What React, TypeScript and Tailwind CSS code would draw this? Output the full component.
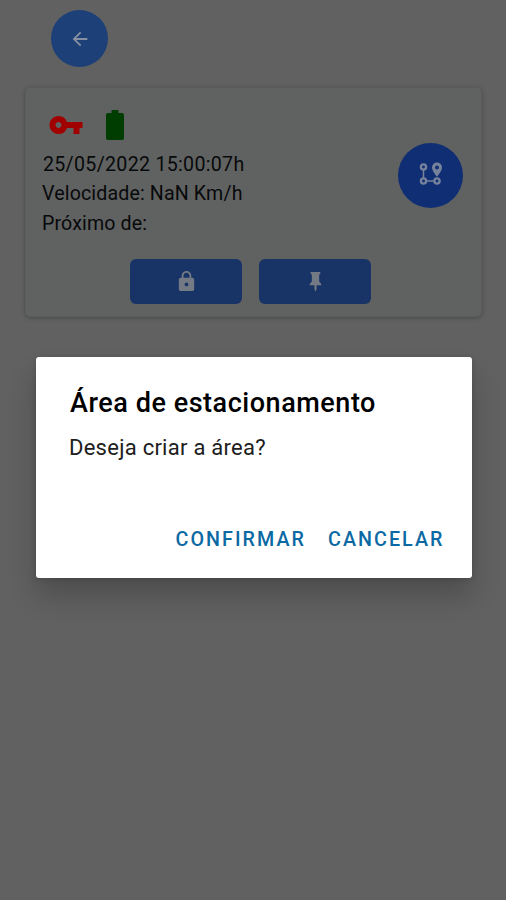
import React from "react";
import { MdArrowBack, MdLock, MdVpnKey } from "react-icons/md";

function RouteIcon() {
  return (
    <svg width="24" height="24" viewBox="0 0 24 24" fill="none" stroke="#77839d" strokeWidth="2.3" className="-mt-[3px]">
      <circle cx="4.5" cy="5" r="2.6" />
      <circle cx="4.5" cy="19" r="2.6" />
      <circle cx="18" cy="19" r="2.6" />
      <path strokeWidth="1.5" d="M4.5 8v8M7.5 19h7.5" />
      <path
        fill="#77839d"
        stroke="none"
        fillRule="evenodd"
        d="M18 .5a5 5 0 0 0-5 5c0 3.5 5 9.2 5 9.2s5-5.7 5-9.2a5 5 0 0 0-5-5Zm0 3a2 2 0 1 1 0 4a2 2 0 0 1 0-4Z"
      />
    </svg>
  );
}

function PinIcon() {
  return (
    <svg width="23" height="23" viewBox="0 0 24 24" fill="#747a84" className="-mt-[1px]">
      <path d="M17 4V2H7v2l1.2 1v7L6 14.5V16h4.900v4l1.100 2.500 1.100-2.500v-4H18v-1.500L15.800 12V5L17 4Z" />
    </svg>
  );
}

function BatteryIcon() {
  return (
    <svg width="18" height="30" viewBox="0 0 18 30" fill="#003d00" className="ml-[22px]">
      <path d="M5.500 0h7v3H16a2 2 0 0 1 2 2v23a2 2 0 0 1-2 2H2a2 2 0 0 1-2-2V5a2 2 0 0 1 2-2h3.500Z" />
    </svg>
  );
}

function VehicleCard() {
  return (
    <section className="ml-[25px] mr-[24px] mt-5 h-[230px] rounded-[5px] border border-[#5b5d5c] bg-[#606261] pt-[18px] shadow-[0_1px_4px_rgba(0,0,0,0.25)]">
      <div className="flex h-[37px] items-center pl-[22px]">
        <MdVpnKey size={36} color="#a00000" />
        <BatteryIcon />
      </div>
      <div className="flex justify-between pl-[16px] pr-[18px]">
        <div className="pt-[7px] text-[19.6px] leading-[29.4px] text-[#08090b]">
          <p className="pl-px tracking-[0.3px]">25/05/2022 15:00:07h</p>
          <p className="tracking-[0.14px]">Velocidade: NaN Km/h</p>
          <p className="tracking-[0.14px]">Próximo de:</p>
        </div>
        <button className="flex h-[65px] w-[65px] items-center justify-center rounded-full bg-[#102e73]">
          <RouteIcon />
        </button>
      </div>
      <div className="mt-[21px] flex justify-center gap-[17px] pr-[6px]">
        <button className="flex h-[45px] w-[112px] items-center justify-center rounded-[6px] bg-[#183466]">
          <MdLock size={23} color="#747a84" />
        </button>
        <button className="flex h-[45px] w-[112px] items-center justify-center rounded-[6px] bg-[#183466]">
          <PinIcon />
        </button>
      </div>
    </section>
  );
}

function ParkingDialog() {
  return (
    <div
      role="dialog"
      className="absolute left-[36px] top-[357px] flex h-[221px] w-[435.5px] flex-col rounded-[3px] bg-white pl-[33px] pr-[27px] pt-[28px] shadow-[0_18px_28px_rgba(0,0,0,0.2),0_1px_5px_rgba(0,0,0,0.15)]"
    >
      <h2 className="pl-px text-[27px] font-medium leading-9 tracking-[0.54px] text-black">Área de estacionamento</h2>
      <p className="mt-[12px] text-[22px] leading-[30px] tracking-[0.26px] text-[#202020]">Deseja criar a área?</p>
      <div className="mt-[63px] flex justify-end gap-[22px] text-[19.7px] font-medium leading-[28px] tracking-[2.05px] text-[#0b69a3]">
        <button>CONFIRMAR</button>
        <button>CANCELAR</button>
      </div>
    </div>
  );
}

export default function App() {
  return (
    <main className="relative h-[900px] w-[506px] overflow-hidden bg-[#616161] pt-[10px] font-['Roboto',sans-serif]">
      <button className="ml-[51px] flex h-[57px] w-[57px] items-center justify-center rounded-full bg-[#1d4079]">
        <MdArrowBack size={22} color="#8790a0" />
      </button>
      <VehicleCard />
      <ParkingDialog />
    </main>
  );
}
